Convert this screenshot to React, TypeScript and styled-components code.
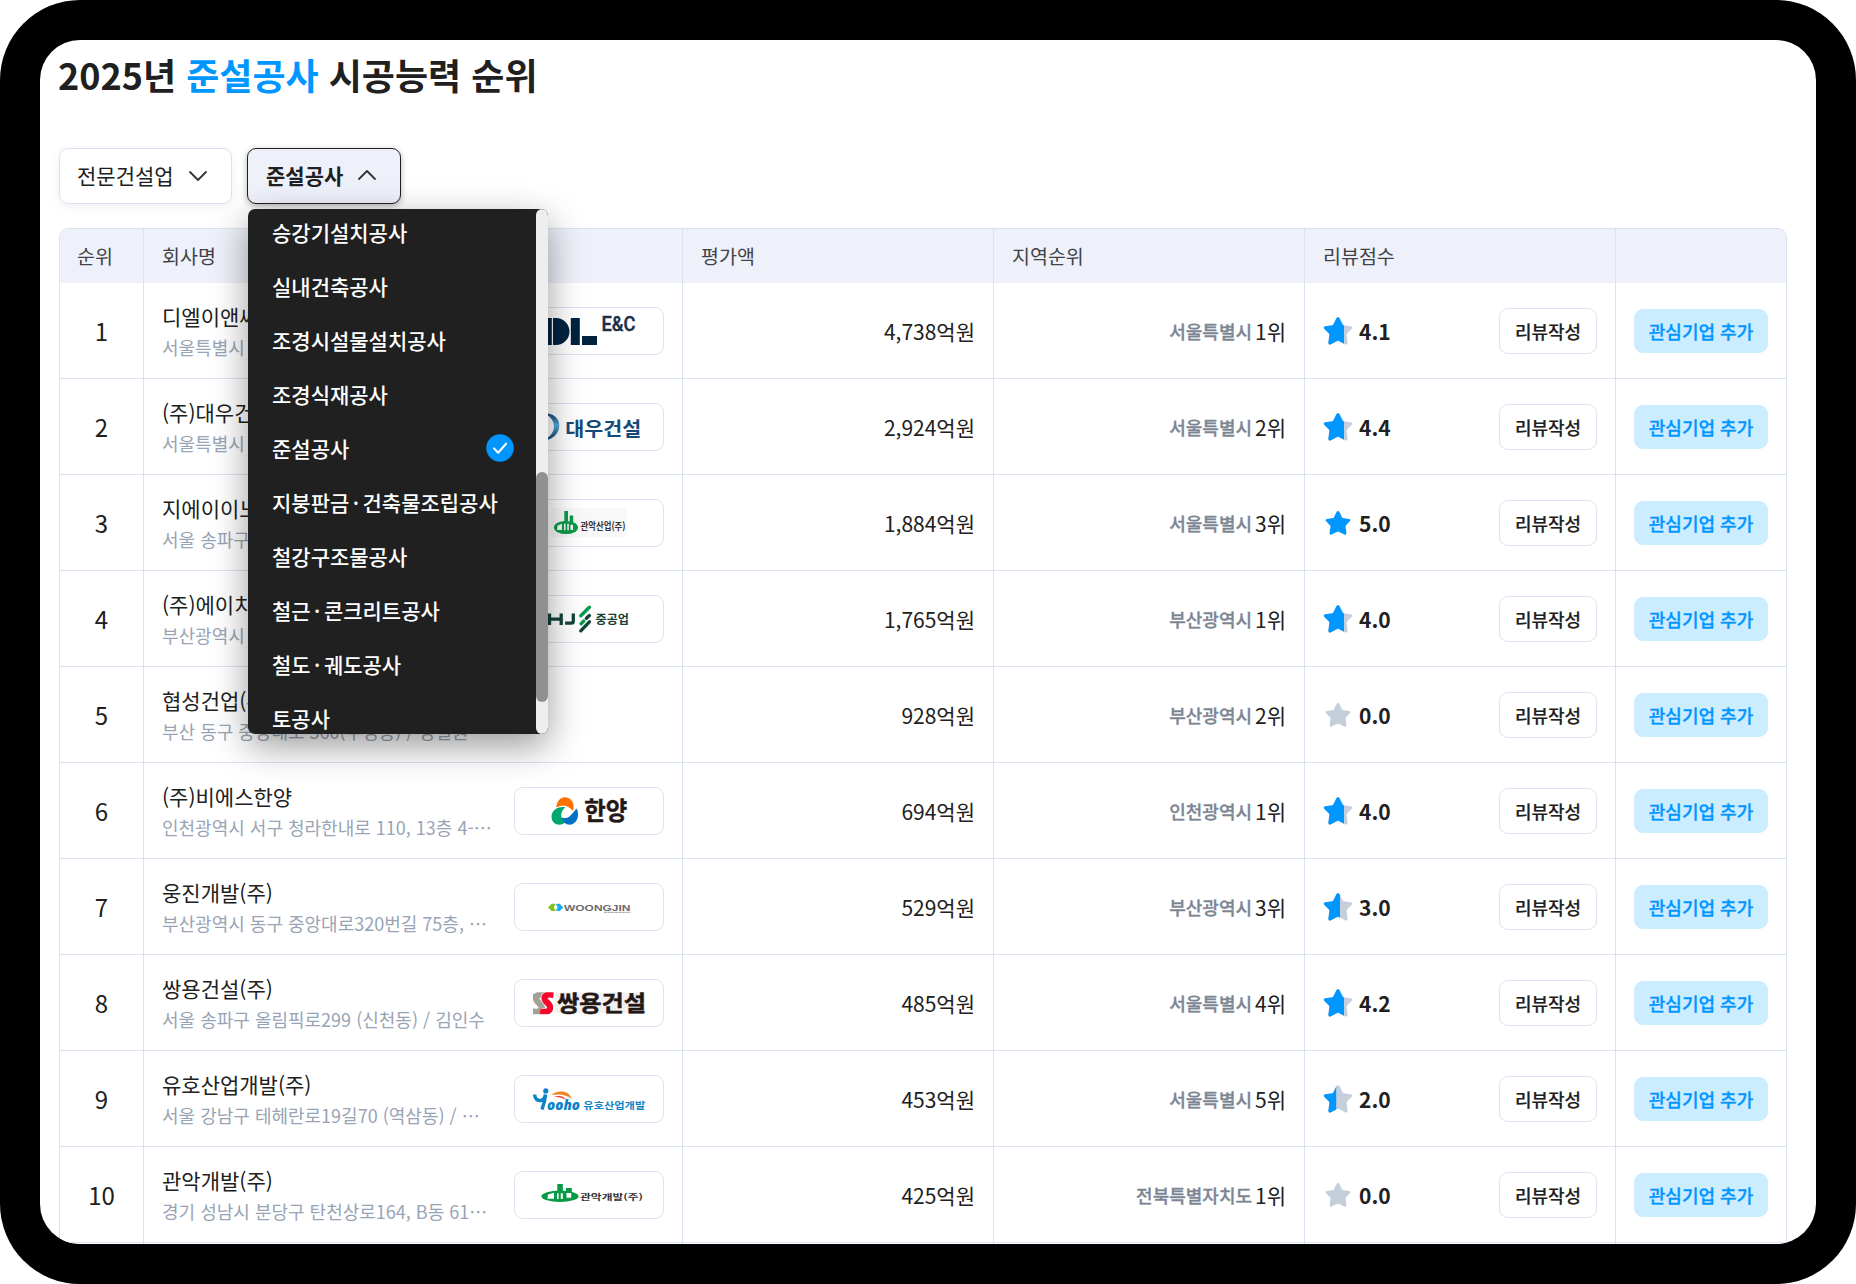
import React from 'react';
import styled, { createGlobalStyle } from 'styled-components';

const GlobalStyle = createGlobalStyle`
  *, *::before, *::after { box-sizing: border-box; }
  body {
    margin: 0;
    background: #fff;
    font-family: 'Noto Sans CJK KR', sans-serif;
    color: #202020;
  }
  button { font-family: inherit; margin: 0; cursor: pointer; }
`;

const line = '#d9e3f0';

const Bezel = styled.div`
  width: 1856px;
  height: 1284px;
  padding: 40px;
  background: #000;
  border-radius: 80px;
  overflow: hidden;
`;

const Screen = styled.main`
  height: 1204px;
  padding: 7px 29px 0 19px;
  background: #fff;
  border-radius: 40px;
  overflow: hidden;
`;

const Title = styled.h1`
  margin: 0 0 0 -1px;
  height: 54px;
  line-height: 54px;
  font-size: 36px;
  font-weight: 700;
  white-space: nowrap;
`;

const Accent = styled.span`
  color: #0096ff;
`;

const Filters = styled.div`
  display: flex;
  gap: 15px;
  margin-top: 47px;
  margin-bottom: 24px;
`;

const SelectWrap = styled.div`
  position: relative;
`;

const SelectButton = styled.button<{ $width: number; $open?: boolean }>`
  display: flex;
  align-items: center;
  justify-content: space-between;
  width: ${(p) => p.$width}px;
  height: 56px;
  padding: 0 18px 0 ${(p) => (p.$open ? 18 : 17)}px;
  border: 1px solid ${(p) => (p.$open ? '#202020' : line)};
  border-radius: 9px;
  background: ${(p) => (p.$open ? '#eef1f9' : '#fff')};
  box-shadow: ${(p) =>
    p.$open ? '0 2px 6px rgba(0, 0, 0, 0.3)' : '0 3px 12px rgba(0, 0, 0, 0.06)'};
  color: #202020;
  font-size: 21px;
  font-weight: ${(p) => (p.$open ? 700 : 400)};
  line-height: 30px;
  white-space: nowrap;
`;

const SelectLabel = styled.span`
  padding-bottom: 2px;
`;

const Menu = styled.div`
  position: absolute;
  z-index: 5;
  top: 61px;
  left: 1px;
  display: flex;
  width: 300px;
  height: 525px;
  border-radius: 7px;
  overflow: hidden;
  background: #202020;
`;

const MenuShadow = styled.div`
  position: absolute;
  z-index: 4;
  top: 61px;
  left: 1px;
  width: 300px;
  height: 525px;
  border-radius: 7px;
  box-shadow: 0 12px 36px rgba(0, 0, 0, 0.4);
`;

const Options = styled.ul`
  flex: 1;
  margin: -4px 0 0;
  padding: 0;
  list-style: none;
`;

const Option = styled.li`
  display: flex;
  align-items: center;
  justify-content: space-between;
  height: 54px;
  padding: 0 22px 0 24px;
  color: #fff;
  font-size: 21px;
  font-weight: 500;
  line-height: 30px;
  word-spacing: -2.4px;
  white-space: nowrap;
`;

const ScrollTrack = styled.div`
  width: 12px;
  height: 525px;
  padding-top: 263px;
  background: #eee;
  border-radius: 6px;
`;

const ScrollThumb = styled.div`
  height: 230px;
  border-radius: 6px;
  background: #909090;
`;

const Table = styled.section`
  width: 1728px;
  border: 1px solid ${line};
  border-radius: 9px 9px 0 0;
  overflow: hidden;
`;

const Row = styled.div<{ $head?: boolean }>`
  display: grid;
  grid-template-columns: 84px 539px 311px 311px 311px 170px;
  height: ${(p) => (p.$head ? 54 : 96)}px;
  background: ${(p) => (p.$head ? '#eef1f9' : '#fff')};
  border-bottom: ${(p) => (p.$head ? 'none' : `1px solid ${line}`)};
`;

const Cell = styled.div<{ $justify?: string }>`
  display: flex;
  align-items: center;
  justify-content: ${(p) => p.$justify || 'space-between'};
  min-width: 0;
  padding: 0 18px;
  border-right: 1px solid ${line};
  font-size: 21px;
  line-height: 30px;
  white-space: nowrap;

  &:last-child { border-right: none; }
`;

const HeadCell = styled(Cell)`
  color: #404247;
  font-size: 19.5px;

  &:first-child { padding-left: 17px; }
`;

const Rank = styled(Cell)`
  padding: 0;
  font-size: 24px;
`;

const Company = styled.div`
  display: flex;
  flex-direction: column;
  min-width: 0;
  padding-top: 2px;
`;

const Name = styled.strong`
  font-size: 21px;
  font-weight: 400;
  line-height: 31px;
`;

const Address = styled.span`
  color: #98a4b5;
  font-size: 18px;
  line-height: 31px;
`;

const LogoBox = styled.div`
  flex: none;
  width: 150px;
  height: 48px;
  border: 1px solid #dbe2f0;
  border-radius: 9px;
  background: #fff;
  overflow: hidden;

  svg { display: block; }
`;

const Region = styled.span`
  margin-right: 3px;
  color: #7c8593;
  font-size: 18px;
  font-weight: 500;
  -webkit-text-stroke: 0.3px currentColor;
`;

const Rating = styled.div`
  display: flex;
  align-items: center;
  gap: 6px;
  font-weight: 700;
`;

const ReviewButton = styled.button`
  width: 98px;
  height: 46px;
  padding: 0;
  border: 1px solid #dbe2f0;
  border-radius: 9px;
  background: #fff;
  color: #202020;
  font-size: 18px;
  font-weight: 500;
  -webkit-text-stroke: 0.2px currentColor;
`;

const FavoriteButton = styled.button`
  width: 134px;
  height: 44px;
  padding: 0;
  border: none;
  border-radius: 9px;
  background: #ccecff;
  color: #0096ff;
  font-size: 18px;
  font-weight: 500;
  -webkit-text-stroke: 0.3px currentColor;
`;

const LogoText = styled.text`
  font-family: 'Noto Sans CJK KR', sans-serif;
`;

const Chevron = ({ up }: { up?: boolean }) => (
  <svg width="30" height="30" viewBox="0 0 30 30" fill="none" stroke="#333" strokeWidth="1.8" strokeLinecap="round" strokeLinejoin="round">
    <path d={up ? 'M7 18l8-8 8 8' : 'M7 11l8 8 8-8'} />
  </svg>
);

const Check = () => (
  <svg width="28" height="28" viewBox="0 0 28 28">
    <circle cx="14" cy="14" r="13.7" fill="#0096ff" />
    <path d="M8 14.4l4.1 4.3 8-9" fill="none" stroke="#fff" strokeWidth="2.1" strokeLinecap="round" strokeLinejoin="round" />
  </svg>
);

const starPath =
  'M15 1.2c.8 0 1.3.5 1.7 1.3l3 6.1c.2.4.5.6.9.7l6.9 1c1.7.3 2.2 1.6 1 2.8l-4.6 4.7c-.3.4-.4.8-.3 1.2l1 7.2c.2 1.9-.9 2.8-2.5 2l-6.2-3.1a2 2 0 0 0-1.8 0l-6.2 3.1c-1.6.8-2.7-.1-2.5-2l1-7.2c.1-.4 0-.8-.3-1.2l-4.6-4.7c-1.2-1.2-.7-2.5 1-2.8l6.900-1c.4-.1.7-.3.9-.7l3-6.100c.4-.8.9-1.300 1.700-1.300z';

const Star = ({ score }: { score: number }) => {
  const n = Math.floor(score);
  const partial = n > 0 && n < 5;
  const scale = partial ? 1 : 0.875;
  const id = `star-${n}`;
  return (
    <svg width="30" height="30" viewBox="0 0 30 30">
      <clipPath id={id}>
        <rect x="0" y="0" width={5.5 + 3.85 * n} height="30" />
      </clipPath>
      <g transform={`translate(15 15) scale(${scale}) translate(-15 -15)`}>
        <path d={starPath} fill={n === 5 ? '#0096ff' : '#c5cfdc'} />
        {partial && <path d={starPath} fill="#0096ff" clipPath={`url(#${id})`} />}
      </g>
    </svg>
  );
};

const sCurve = 'M40 16.2c-6-1.800-10.200.2-9.300 3.900 1 3.700 5.800 4.600 5.500 8.800-.3 3.900-5 4.700-10.200 3.400';

const logos: Record<string, React.ReactNode> = {
  dl: (
    <>
      <g fill="#02233f">
        <path d="M28 11h9.8v27H28zM39 11h3a13.5 13.5 0 0 1 0 27h-3zM56.8 11h9v27h-9zM68 29h15v9H68z" />
      </g>
      <text x="87.500" y="23.500" fontFamily="Roboto" fontSize="19.500" fontWeight="500" fill="#1b3048" stroke="#1b3048" strokeWidth=".4" textLength="34" lengthAdjust="spacingAndGlyphs">E&amp;C</text>
    </>
  ),
  daewoo: (
    <>
      <defs>
        <linearGradient id="dw" x1="0" y1="0" x2="0" y2="1">
          <stop offset="0.1" stopColor="#1c5288" />
          <stop offset="0.45" stopColor="#56b0dd" />
          <stop offset="0.95" stopColor="#12406f" />
        </linearGradient>
      </defs>
      <path d="M30 10c9 .3 15.300 5 15.300 12.500 0 7.500-6 14-15.300 15 6-3.500 10-8.500 10-14 0-6-4-10.500-10-13.500z" fill="url(#dw)" />
      <LogoText x="51.200" y="32.700" fontSize="19.500" fontWeight="700" fill="#154a78" textLength="76" lengthAdjust="spacingAndGlyphs">대우건설</LogoText>
    </>
  ),
  gwanakInd: (
    <>
      <rect x="37.500" y="9.500" width="75" height="28.500" fill="#f8f8f8" />
      <ellipse cx="52" cy="28.500" rx="12" ry="6.600" fill="#0a9b48" />
      <path d="M50.300 12h3.700v12h-3.700zM55.700 16.500h3.500v9h-3.500z" fill="#0a9b48" />
      <path d="M43.500 26.500l4.500-1.800v6.300h-5zM50 24.800h1.500v6.500H50zM53.300 24.800h1.500v6.500h-1.500zM56.500 25.800h2.500v5.200h-2.500z" fill="#f8f8f8" />
      <LogoText x="66.500" y="30.700" fontSize="10" fontWeight="700" fill="#333" textLength="45" lengthAdjust="spacingAndGlyphs">관악산업(주)</LogoText>
    </>
  ),
  hj: (
    <>
      <g fill="none" stroke="#12453a" strokeWidth="3.300">
        <path d="M35.500 18.500v11.400M47.200 18.500v11.400M35.500 24.200h11.700M59.300 18.500v7.500q0 2.200-2.200 2.200h-6" />
      </g>
      <g fill="none" strokeWidth="3.400" strokeLinecap="round">
        <path d="M66.800 20.700l8.600-8.400M67 28.700l2.800-2.600" stroke="#059a4c" />
        <path d="M72.400 23.300l3-2.700M66.800 35.800l8.600-9" stroke="#12453a" />
      </g>
      <LogoText x="81.500" y="28.700" fontSize="12.500" fontWeight="700" fill="#153f37" textLength="33.500" lengthAdjust="spacingAndGlyphs">중공업</LogoText>
    </>
  ),
  hanyang: (
    <>
      <path d="M42.300 20.500c.2-6 3.800-10.300 8.600-10.300 5 0 8.700 4 8.700 9.300 0 1.700-.2 3-.8 4.200-2-2-4.300-4.200-7-4.700-3-.6-6.400-.3-9.500 1.500z" fill="#ff7200" />
      <path d="M51.300 20.300c-5-1.500-13.800 1.500-13.800 9.400 0 4.700 3.400 8 7.800 8 3 0 5.300-1.200 6.500-3.400-3.500-2-5-4-4.600-6.800.4-3.200 2.200-5.400 4.100-7.200z" fill="#00a86b" />
      <path d="M62.500 21.500c1.200 1.900 1.600 4 1.500 6.500-.2 5.600-3.800 9.700-8.500 9.700-3.800 0-7-2.800-7.800-7.200 2.600 1 5.400.8 7.600-1 2.300-1.700 4.800-5 7.200-8z" fill="#0071c5" />
      <LogoText x="70.300" y="33.300" fontSize="25" fontWeight="700" fill="#231815" stroke="#231815" strokeWidth=".4" textLength="43" lengthAdjust="spacingAndGlyphs">한양</LogoText>
    </>
  ),
  woongjin: (
    <>
      <path d="M34 24.400l3.600-3.700h2.700a1.300 1.300 0 0 1 1.200 1.300l-1.400 1.200v2.400l1.400 1.200a1.300 1.300 0 0 1-1.200 1.300h-2.700z" fill="#7fc31c" />
      <path d="M49.300 24.400l-3.600-3.700H43a1.300 1.300 0 0 0-1 1.300l1.400 1.200v2.400L42 26.800a1.300 1.300 0 0 0 1 1.300h2.700z" fill="#14aef0" />
      <text x="50" y="27.900" fontFamily="Liberation Sans" fontSize="9.600" fontWeight="700" fill="#6e6a68" textLength="66.500" lengthAdjust="spacingAndGlyphs">WOONGJIN</text>
      <path d="M90 29.300h26.500" stroke="#999" strokeWidth="1" strokeDasharray="3 .6" />
    </>
  ),
  ssangyong: (
    <>
      <rect x="41" y="13.500" width="90" height="20.500" fill="#f2f1f0" />
      <clipPath id="ss">
        <rect x="19" y="13.200" width="20.500" height="22" />
      </clipPath>
      <g clipPath="url(#ss)" fill="none">
        <path d={sCurve} transform="translate(-8.500 0)" stroke="#a3a198" strokeWidth="6.500" />
        <path d="M19 15v4" stroke="#a3a198" strokeWidth="8" />
        <path d={sCurve} stroke="#fff" strokeWidth="7.500" />
        <path d={sCurve} stroke="#f5082b" strokeWidth="6.200" />
      </g>
      <LogoText x="43" y="32" fontSize="21.500" fontWeight="700" fill="#231815" stroke="#231815" strokeWidth=".5" textLength="89" lengthAdjust="spacingAndGlyphs">쌍용건설</LogoText>
    </>
  ),
  yooho: (
    <>
      <g fill="none" stroke="#0c83c6" strokeWidth="3.500">
        <path d="M20.600 19.500c.3 4.500 3 6.600 6.300 6 2.500-.5 4-2 4.400-5.700M31.600 19.500c-.6 5-1.800 10-3.600 15" />
      </g>
      <circle cx="31.800" cy="15.900" r="2.600" fill="#0c83c6" />
      <path d="M37 20c8-5.500 18-4.500 20.800 4-4.500-4.300-12-5.500-20.800-4z" fill="#f58220" />
      <path d="M40 22c5-2.200 10-1 12.300 3-3.500-2.200-7.300-3.300-12.300-3z" fill="#e8382f" />
      <text x="33" y="34.600" fontFamily="Open Sans" fontSize="14" fontWeight="800" fontStyle="italic" fill="#0c83c6" textLength="33" lengthAdjust="spacingAndGlyphs">ooho</text>
      <LogoText x="69.300" y="34.300" fontSize="9.500" fontWeight="700" fill="#0c83c6" textLength="62" lengthAdjust="spacingAndGlyphs">유호산업개발</LogoText>
    </>
  ),
  gwanakDev: (
    <>
      <ellipse cx="46" cy="25.300" rx="18.500" ry="5.700" fill="#079a45" />
      <path d="M43.300 13h5.500v9h-5.500zM52 17h5.800v6H52z" fill="#079a45" />
      <path d="M34 23.500l6-1.700v6h-6.600zM43 22.300h1.600V28H43zM46.800 22.300h2V28h-2zM52.500 22h4.700v4.800h-4.700z" fill="#fff" />
      <LogoText x="66" y="28.600" fontSize="8" fontWeight="700" fill="#333" textLength="63" lengthAdjust="spacingAndGlyphs">관악개발(주)</LogoText>
    </>
  ),
};

interface CompanyRow {
  name: string;
  address: string;
  logo?: string;
  amount: string;
  region: string;
  regionRank: number;
  score: number;
}

const companies: CompanyRow[] = [
  { name: '디엘이앤씨(주)', address: '서울특별시 종로구', logo: 'dl', amount: '4,738', region: '서울특별시', regionRank: 1, score: 4.1 },
  { name: '(주)대우건설', address: '서울특별시 중구', logo: 'daewoo', amount: '2,924', region: '서울특별시', regionRank: 2, score: 4.4 },
  { name: '지에이이노', address: '서울 송파구', logo: 'gwanakInd', amount: '1,884', region: '서울특별시', regionRank: 3, score: 5 },
  { name: '(주)에이치', address: '부산광역시', logo: 'hj', amount: '1,765', region: '부산광역시', regionRank: 1, score: 4 },
  { name: '협성건업(주)', address: '부산 동구 중앙대로 360(수정동) / 정철원', amount: '928', region: '부산광역시', regionRank: 2, score: 0 },
  { name: '(주)비에스한양', address: '인천광역시 서구 청라한내로 110, 13층 4-…', logo: 'hanyang', amount: '694', region: '인천광역시', regionRank: 1, score: 4 },
  { name: '웅진개발(주)', address: '부산광역시 동구 중앙대로320번길 75층, …', logo: 'woongjin', amount: '529', region: '부산광역시', regionRank: 3, score: 3 },
  { name: '쌍용건설(주)', address: '서울 송파구 올림픽로299 (신천동) / 김인수', logo: 'ssangyong', amount: '485', region: '서울특별시', regionRank: 4, score: 4.2 },
  { name: '유호산업개발(주)', address: '서울 강남구 테헤란로19길70 (역삼동) / …', logo: 'yooho', amount: '453', region: '서울특별시', regionRank: 5, score: 2 },
  { name: '관악개발(주)', address: '경기 성남시 분당구 탄천상로164, B동 61…', logo: 'gwanakDev', amount: '425', region: '전북특별자치도', regionRank: 1, score: 0 },
];

const options = [
  '승강기설치공사',
  '실내건축공사',
  '조경시설물설치공사',
  '조경식재공사',
  '준설공사',
  '지붕판금 · 건축물조립공사',
  '철강구조물공사',
  '철근 · 콘크리트공사',
  '철도 · 궤도공사',
  '토공사',
];

const selected = '준설공사';

export default function App() {
  return (
    <>
      <GlobalStyle />
      <Bezel lang="ko">
        <Screen>
          <Title>
            2025년 <Accent>{selected}</Accent> 시공능력 순위
          </Title>
          <Filters>
            <SelectButton $width={173}>
              <SelectLabel>전문건설업</SelectLabel>
              <Chevron />
            </SelectButton>
            <SelectWrap>
              <MenuShadow />
              <SelectButton $width={154} $open>
                <SelectLabel>{selected}</SelectLabel>
                <Chevron up />
              </SelectButton>
              <Menu>
                <Options>
                  {options.map((o) => (
                    <Option key={o}>
                      {o}
                      {o === selected && <Check />}
                    </Option>
                  ))}
                </Options>
                <ScrollTrack>
                  <ScrollThumb />
                </ScrollTrack>
              </Menu>
            </SelectWrap>
          </Filters>
          <Table>
            <Row $head>
              {['순위', '회사명', '평가액', '지역순위', '리뷰점수', ''].map((h) => (
                <HeadCell key={h}>{h}</HeadCell>
              ))}
            </Row>
            {companies.map((c, i) => (
              <Row key={c.name}>
                <Rank $justify="center">{i + 1}</Rank>
                <Cell>
                  <Company>
                    <Name>{c.name}</Name>
                    <Address>{c.address}</Address>
                  </Company>
                  {c.logo && (
                    <LogoBox>
                      <svg width="148" height="46" viewBox="1 1 148 46">
                        {logos[c.logo]}
                      </svg>
                    </LogoBox>
                  )}
                </Cell>
                <Cell $justify="flex-end">{c.amount}억원</Cell>
                <Cell $justify="flex-end">
                  <Region>{c.region}</Region>
                  {c.regionRank}위
                </Cell>
                <Cell>
                  <Rating>
                    <Star score={c.score} />
                    {c.score.toFixed(1)}
                  </Rating>
                  <ReviewButton>리뷰작성</ReviewButton>
                </Cell>
                <Cell>
                  <FavoriteButton>관심기업 추가</FavoriteButton>
                </Cell>
              </Row>
            ))}
            <Row>
              {[0, 1, 2, 3, 4, 5].map((n) => (
                <Cell key={n} />
              ))}
            </Row>
          </Table>
        </Screen>
      </Bezel>
    </>
  );
}
